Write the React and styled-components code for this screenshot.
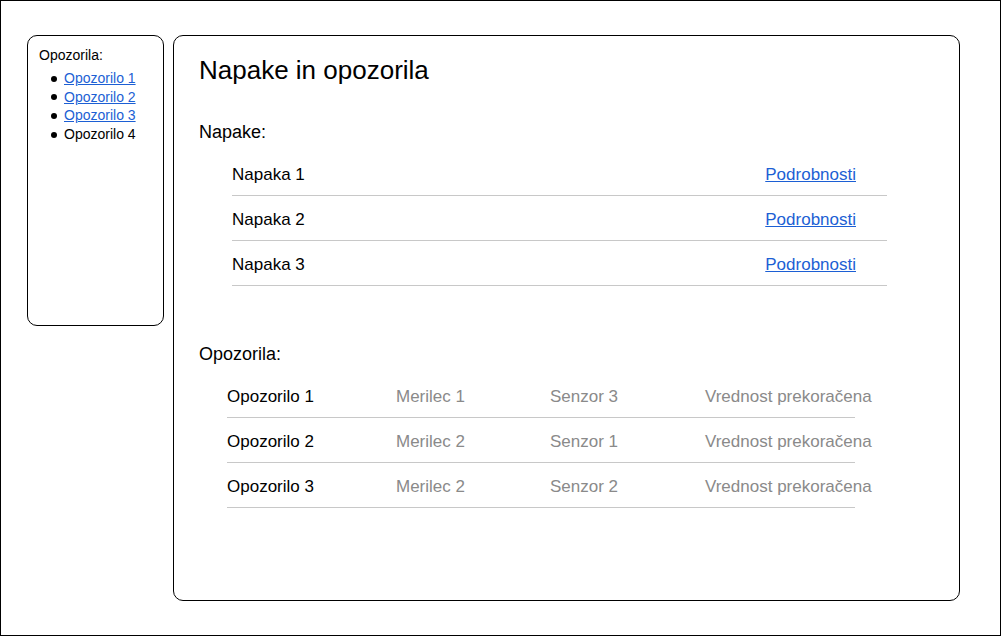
import React from 'react'
import styled, { createGlobalStyle } from 'styled-components';

const GlobalStyle = createGlobalStyle`
  html, body {
    margin: 0;
    padding: 0;
    background: #fff;
  }
  body {
    font-family: "Liberation Sans", Arial, sans-serif;
    color: #000;
  }
`;

const napake = ['Napaka 1', 'Napaka 2', 'Napaka 3'];

const opozorila = [
    { name: 'Opozorilo 1', merilec: 'Merilec 1', senzor: 'Senzor 3', opis: 'Vrednost prekoračena' },
    { name: 'Opozorilo 2', merilec: 'Merilec 2', senzor: 'Senzor 1', opis: 'Vrednost prekoračena' },
    { name: 'Opozorilo 3', merilec: 'Merilec 2', senzor: 'Senzor 2', opis: 'Vrednost prekoračena' },
];

const App = () => {
    return (
        <>
            <GlobalStyle />
            <Frame>
                <Sidebar>
                    <SideTitle>Opozorila:</SideTitle>
                    <SideList>
                        <SideItem><SideLink href="#">Opozorilo 1</SideLink></SideItem>
                        <SideItem><SideLink href="#">Opozorilo 2</SideLink></SideItem>
                        <SideItem><SideLink href="#">Opozorilo 3</SideLink></SideItem>
                        <SideItem>Opozorilo 4</SideItem>
                    </SideList>
                </Sidebar>

                <Main>
                    <Title>Napake in opozorila</Title>

                    <SectionTitle>Napake:</SectionTitle>
                    <ErrorList>
                        {napake.map((n) => (
                            <ErrorRow key={n}>
                                <span>{n}</span>
                                <DetailLink href="#">Podrobnosti</DetailLink>
                            </ErrorRow>
                        ))}
                    </ErrorList>

                    <SectionTitle $top={58}>Opozorila:</SectionTitle>
                    <WarningList>
                        {opozorila.map((o) => (
                            <WarningRow key={o.name}>
                                <span>{o.name}</span>
                                <Muted>{o.merilec}</Muted>
                                <Muted>{o.senzor}</Muted>
                                <Muted>{o.opis}</Muted>
                            </WarningRow>
                        ))}
                    </WarningList>
                </Main>
            </Frame>
        </>
    )
}

export default App;

const Frame = styled.div`
    box-sizing: border-box;
    width: 1001px;
    height: 636px;
    border: 1px solid #000;
    padding: 34px 0 0 26px;
    display: flex;
    align-items: flex-start;
    gap: 9px;
`;

const Sidebar = styled.aside`
    box-sizing: border-box;
    width: 137px;
    height: 291px;
    border: 1px solid #000;
    border-radius: 10px;
    padding: 11px 0 0 11px;
    font-size: 14px;
`;

const SideTitle = styled.div`
    line-height: 16px;
`;

const SideList = styled.ul`
    margin: 6px 0 0;
    padding-left: 25px;
    list-style: none;
    line-height: 18.7px;
`;

const SideItem = styled.li`
    position: relative;

    &::before {
        content: '';
        position: absolute;
        left: -13px;
        top: 6.5px;
        width: 6px;
        height: 6px;
        border-radius: 50%;
        background: #000;
    }
`;

const SideLink = styled.a`
    color: #1c5fd4;
    text-decoration: underline;
`;

const Main = styled.main`
    box-sizing: border-box;
    width: 787px;
    height: 566px;
    border: 1px solid #000;
    border-radius: 10px;
    padding: 19px 0 0 25px;
`;

const Title = styled.h1`
    margin: 0;
    font-size: 26px;
    font-weight: normal;
    line-height: 30px;
`;

const SectionTitle = styled.h2`
    margin: ${p => p.$top || 37}px 0 0;
    font-size: 18px;
    font-weight: normal;
    line-height: 20px;
`;

const ErrorList = styled.div`
    margin: 9px 0 0 33px;
    width: 655px;
`;

const ErrorRow = styled.div`
    box-sizing: border-box;
    height: 45px;
    padding: 4px 31px 0 0;
    border-bottom: 1px solid #c8c8c8;
    display: flex;
    align-items: center;
    justify-content: space-between;
    font-size: 17px;
`;

const DetailLink = styled.a`
    color: #1c5fd4;
    text-decoration: underline;
`;

const WarningList = styled.div`
    margin: 9px 0 0 28px;
    width: 628px;
`;

const WarningRow = styled.div`
    box-sizing: border-box;
    height: 45px;
    padding-top: 4px;
    border-bottom: 1px solid #c8c8c8;
    display: grid;
    grid-template-columns: 169px 154px 155px 150px;
    align-items: center;
    font-size: 17px;
    white-space: nowrap;
`;

const Muted = styled.span`
    color: #8a8a8a;
`;
